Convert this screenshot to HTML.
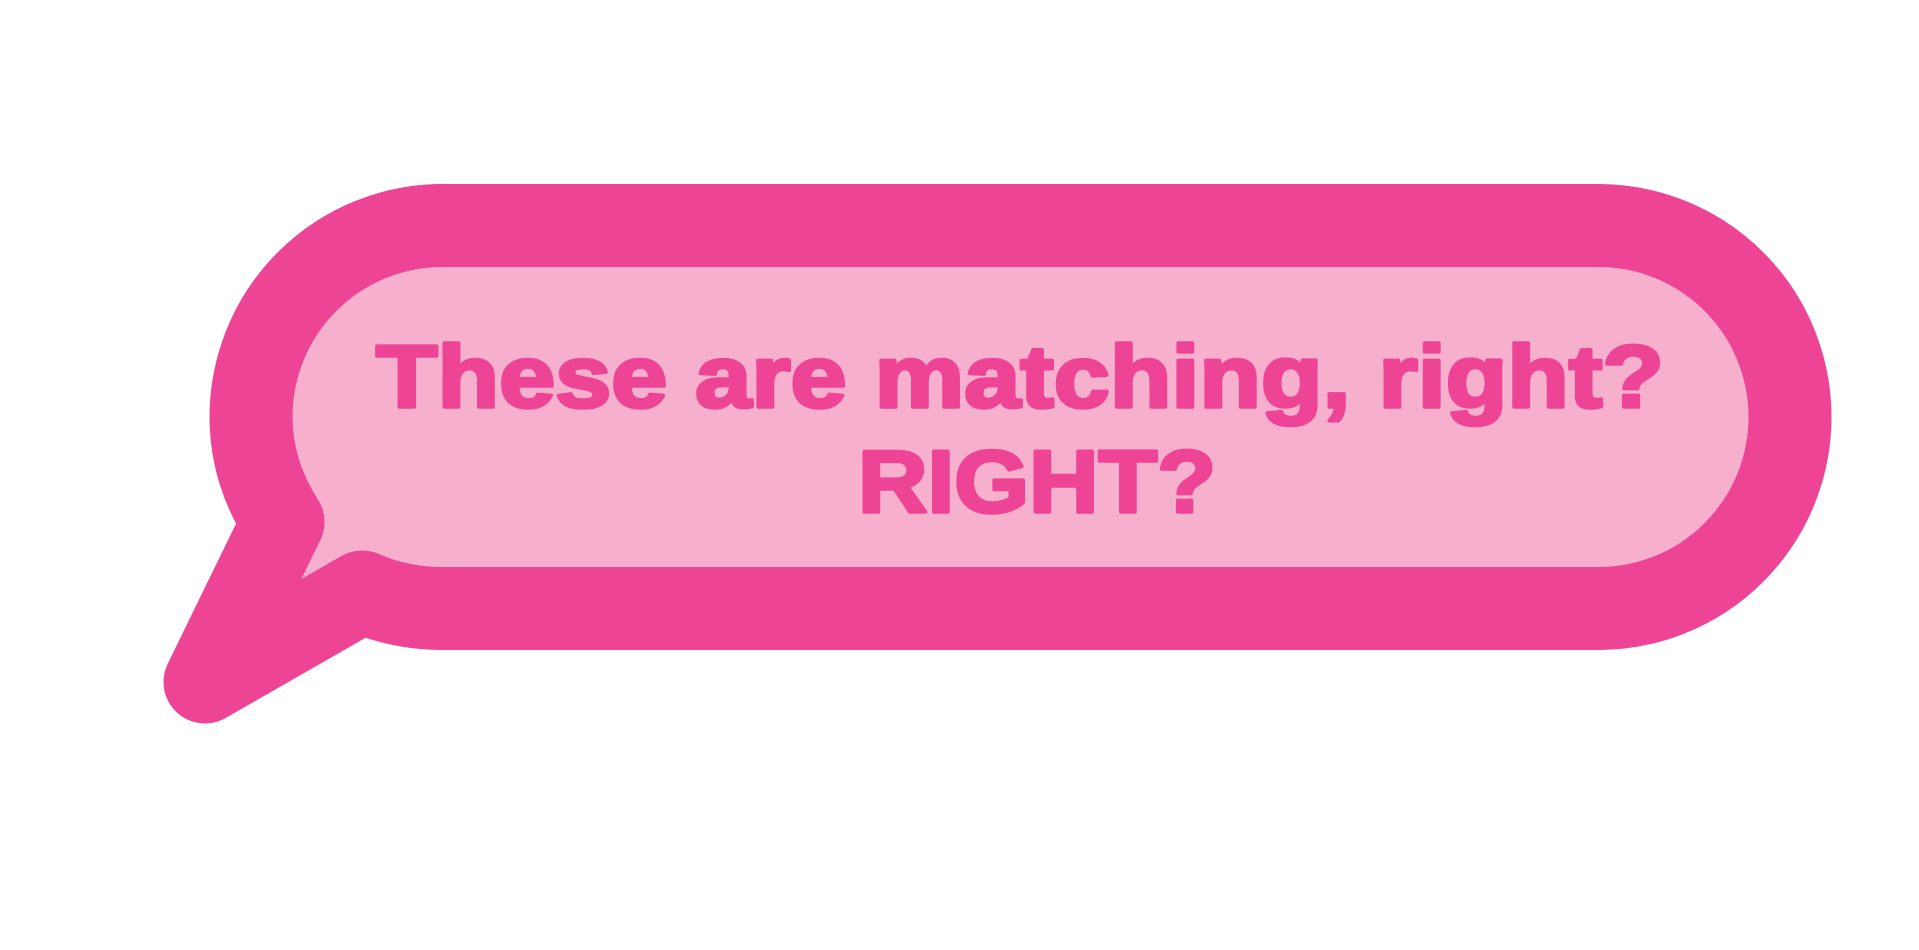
<!DOCTYPE html>
<html><head><meta charset="utf-8"><style>
html,body{margin:0;padding:0;background:#fff;width:1919px;height:950px;overflow:hidden}
svg{display:block}
</style></head><body>
<svg width="1919" height="950" xmlns="http://www.w3.org/2000/svg">
<path d="M442.5 225.5 H1598.5 A191.5 191.5 0 0 1 1598.5 608.5 H442.5 Q400 608.5 362 592 L205 682 L283 522 Q251 472 251 417 A191.5 191.5 0 0 1 442.5 225.5 Z" fill="#f6afcc" stroke="#ee4496" stroke-width="83" stroke-linejoin="round"/>
<g fill="#ee4496" stroke="#ee4496" stroke-width="3.5" stroke-linejoin="round" font-family="'Liberation Sans',Arial,sans-serif" font-weight="bold" font-size="88">
<text x="376" y="407" textLength="1288" lengthAdjust="spacingAndGlyphs">These are matching, right?</text>
<text x="858" y="512" textLength="358" lengthAdjust="spacingAndGlyphs">RIGHT?</text>
</g>
</svg>
</body></html>
